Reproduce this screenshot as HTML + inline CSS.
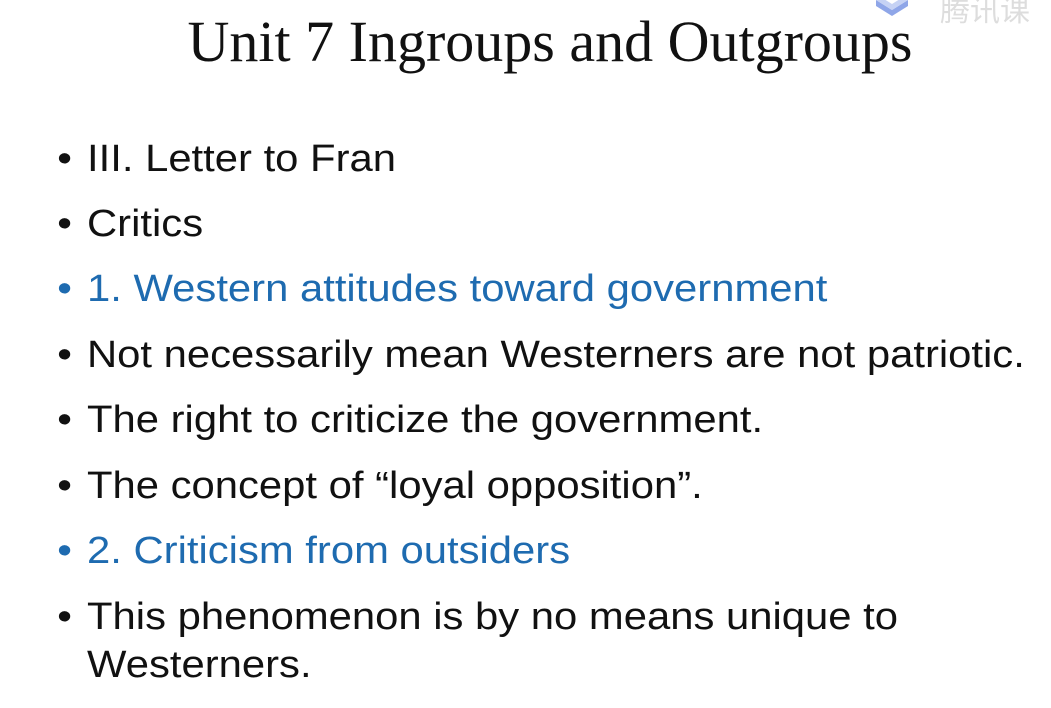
<!DOCTYPE html>
<html><head><style>
body{margin:0;width:1051px;height:708px;background:#fff;overflow:hidden;position:relative;font-family:"Liberation Sans",sans-serif;color:#111}
.t{position:absolute;left:0;width:1100px;text-align:center;top:8px;font-family:"Liberation Serif",serif;font-size:58px;color:#111}
.l{position:absolute;left:87px;font-size:38px;line-height:40px;white-space:nowrap;transform:scaleX(1.1);transform-origin:0 0}
.l:before{content:"•";position:absolute;left:-27px}
.b{color:#1e6bb0}
.wm{position:absolute;top:-10px;left:872px;width:40px;height:28px}
</style></head><body>
<svg class="wm" viewBox="0 0 40 28"><path d="M4 10 L20 20 L36 10 L36 16 L20 26 L4 16Z" fill="#8fa6e8"/><path d="M4 4 L20 14 L36 4 L36 10 L20 20 L4 10Z" fill="#c6d2f4"/></svg>
<div style="position:absolute;left:940px;top:-14px;font-size:30px;color:#ddd;font-family:'Noto Sans CJK SC',sans-serif">腾讯课</div>
<div class="t">Unit 7 Ingroups and Outgroups</div>
<div class="l" style="top:139px">III. Letter to Fran</div>
<div class="l" style="top:204px">Critics</div>
<div class="l b" style="top:269px">1. Western attitudes toward government</div>
<div class="l" style="top:335px">Not necessarily mean Westerners are not patriotic.</div>
<div class="l" style="top:400px">The right to criticize the government.</div>
<div class="l" style="top:466px">The concept of “loyal opposition”.</div>
<div class="l b" style="top:531px">2. Criticism from outsiders</div>
<div class="l" style="top:597px">This phenomenon is by no means unique to<br><span style="position:relative;top:8px">Westerners.</span></div>
</body></html>
